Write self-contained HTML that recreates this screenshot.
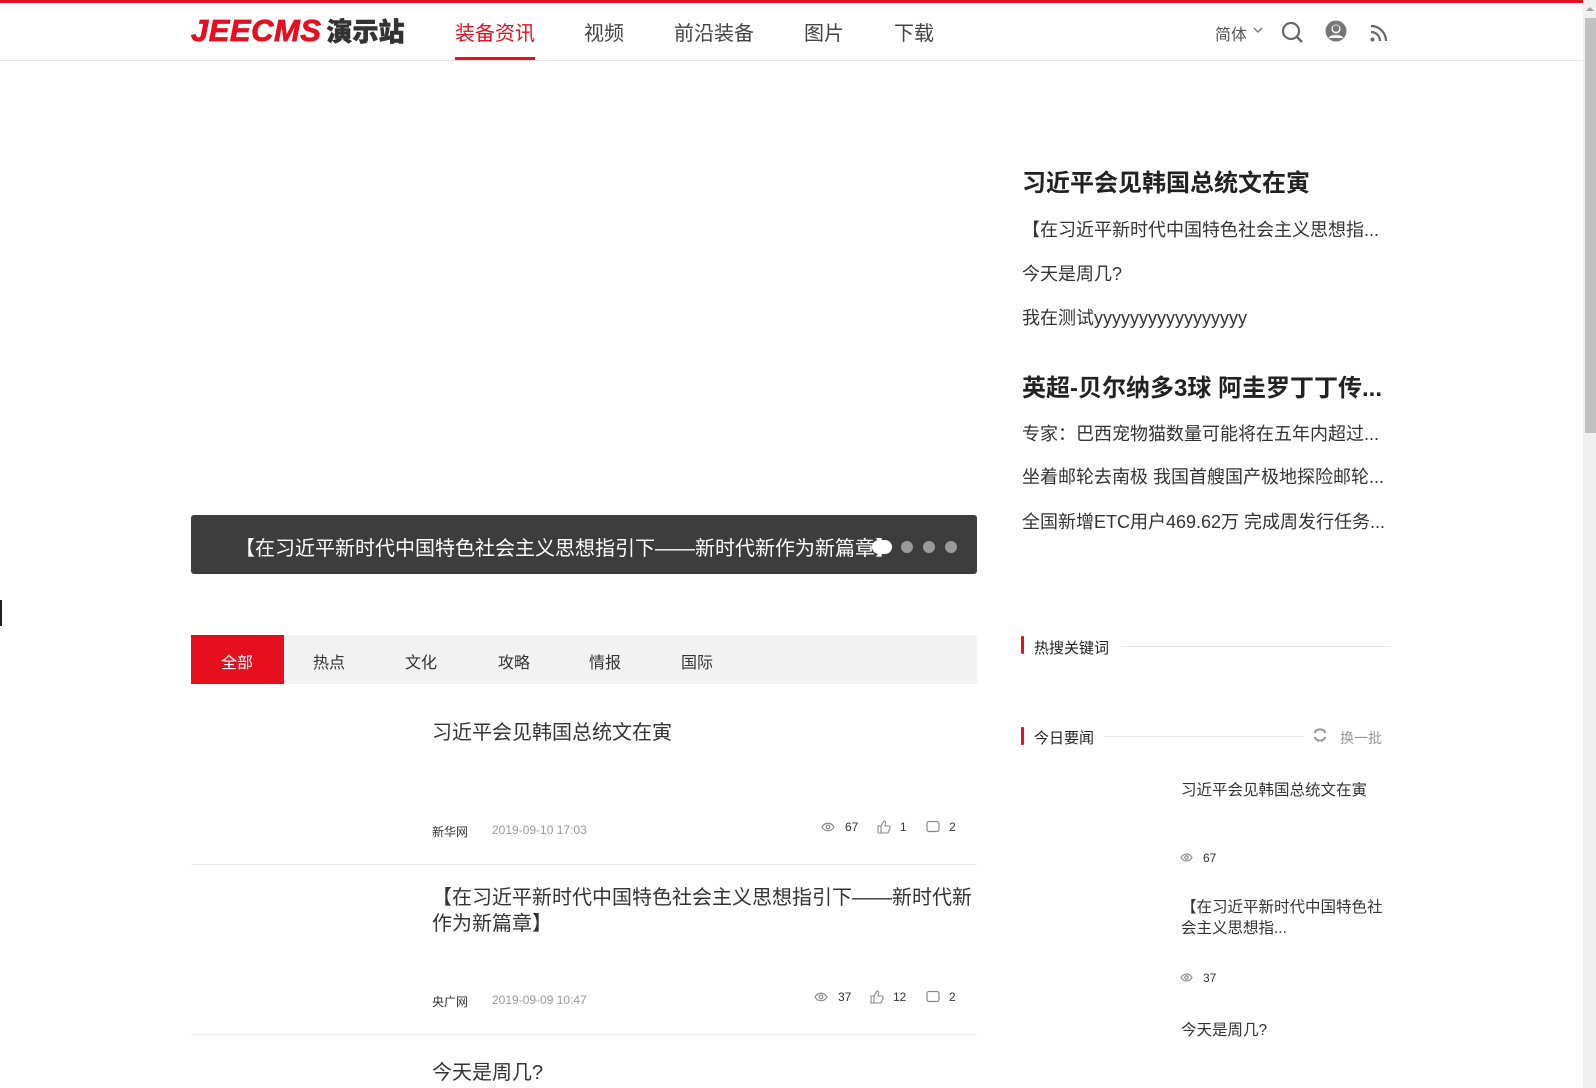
<!DOCTYPE html>
<html><head><meta charset="utf-8"><style>
*{margin:0;padding:0;box-sizing:border-box}
body{width:1596px;height:1088px;overflow:hidden;background:#fff;font-family:"Liberation Sans","Noto Sans CJK SC",sans-serif;color:#333;position:relative}
.a{position:absolute;white-space:nowrap}
.top{left:0;top:0;width:1583px;height:3px;background:#e60f1e}
.hdr{left:0;top:60px;width:1583px;height:1px;background:#e5e5e5}
.nav{font-size:20px;color:#444;top:17px}
.rt{font-size:24px;font-weight:bold;color:#222}
.ri{font-size:18px;color:#333}
.tab{font-size:16px;color:#333;top:649px}
.meta{font-size:12px;color:#333}
.date{font-size:12px;color:#999}
.st{font-size:12px;color:#333}
.div{height:1px;background:#e8e8e8;left:191px;width:786px}
.ic{display:inline-block;vertical-align:-2px}
</style></head><body>
<div class="a top"></div>
<div class="a hdr"></div>
<div class="a" style="left:191px;top:12px;font-size:31px;font-weight:900;font-style:italic;color:#e60f1e;letter-spacing:0.5px;-webkit-text-stroke:0.8px #e60f1e">JEECMS<span style="font-style:normal;color:#333;font-size:26px;margin-left:5px;letter-spacing:0;-webkit-text-stroke:0.5px #333">演示站</span></div>
<div class="a nav" style="left:455px;color:#e60f1e">装备资讯</div>
<div class="a" style="left:455px;top:57px;width:80px;height:3px;background:#e60f1e"></div>
<div class="a nav" style="left:584px">视频</div>
<div class="a nav" style="left:674px">前沿装备</div>
<div class="a nav" style="left:804px">图片</div>
<div class="a nav" style="left:894px">下载</div>
<div class="a" style="left:1215px;top:21px;font-size:16px;color:#555">简体</div>
<svg class="a" style="left:1253px;top:27px" width="10" height="7" viewBox="0 0 10 7"><path d="M1 1l4 4 4-4" fill="none" stroke="#777" stroke-width="1.4"/></svg>
<svg class="a" style="left:1281px;top:21px" width="24" height="24" viewBox="0 0 24 24"><circle cx="10" cy="10" r="8" fill="none" stroke="#666" stroke-width="2.2"/><path d="M16 16l5 5" stroke="#666" stroke-width="2.4"/></svg>
<svg class="a" style="left:1325px;top:20px" width="22" height="22" viewBox="0 0 22 22"><circle cx="11" cy="11" r="10.5" fill="#777"/><circle cx="11" cy="9" r="4.5" fill="#fff"/><path d="M3.5 18c2-4 13-4 15 0" fill="#fff"/><circle cx="11" cy="8.5" r="3.3" fill="#777"/></svg>
<svg class="a" style="left:1370px;top:24px" width="18" height="18" viewBox="0 0 18 18"><circle cx="2.5" cy="15.5" r="2" fill="#666"/><path d="M1 8a9 9 0 0 1 9 9M1 2a15 15 0 0 1 15 15" fill="none" stroke="#666" stroke-width="2.2"/></svg>

<div class="a" style="left:191px;top:515px;width:786px;height:59px;background:#3d3d3d;border-radius:3px"></div>
<div class="a" style="left:235px;top:532px;font-size:20px;color:#fff">【在习近平新时代中国特色社会主义思想指引下——新时代新作为新篇章】</div>
<div class="a" style="left:872px;top:540px;width:20px;height:14px;border-radius:7px;background:#fff"></div>
<div class="a" style="left:901px;top:541px;width:12px;height:12px;border-radius:6px;background:#9a9a9a"></div>
<div class="a" style="left:923px;top:541px;width:12px;height:12px;border-radius:6px;background:#9a9a9a"></div>
<div class="a" style="left:945px;top:541px;width:12px;height:12px;border-radius:6px;background:#9a9a9a"></div>

<div class="a rt" style="left:1022px;top:163px">习近平会见韩国总统文在寅</div>
<div class="a ri" style="left:1022px;top:216px">【在习近平新时代中国特色社会主义思想指...</div>
<div class="a ri" style="left:1022px;top:260px">今天是周几?</div>
<div class="a ri" style="left:1022px;top:304px">我在测试yyyyyyyyyyyyyyyyy</div>
<div class="a rt" style="left:1022px;top:368px">英超-贝尔纳多3球 阿圭罗丁丁传...</div>
<div class="a ri" style="left:1022px;top:420px">专家：巴西宠物猫数量可能将在五年内超过...</div>
<div class="a ri" style="left:1022px;top:463px">坐着邮轮去南极 我国首艘国产极地探险邮轮...</div>
<div class="a ri" style="left:1022px;top:508px">全国新增ETC用户469.62万 完成周发行任务...</div>

<div class="a" style="left:191px;top:635px;width:786px;height:49px;background:#f2f2f2"></div>
<div class="a" style="left:191px;top:635px;width:93px;height:49px;background:#e60f1e"></div>
<div class="a tab" style="left:221px;color:#fff">全部</div>
<div class="a tab" style="left:313px">热点</div>
<div class="a tab" style="left:405px">文化</div>
<div class="a tab" style="left:498px">攻略</div>
<div class="a tab" style="left:589px">情报</div>
<div class="a tab" style="left:681px">国际</div>

<svg width="0" height="0" style="position:absolute"><defs>
<symbol id="eye" viewBox="0 0 14 14"><path d="M1 7c3-5 9-5 12 0-3 5-9 5-12 0z" fill="none" stroke="#888" stroke-width="1.2"/><circle cx="7" cy="7" r="1.8" fill="none" stroke="#888" stroke-width="1.2"/></symbol>
<symbol id="thumb" viewBox="0 0 14 14"><path d="M1 6h3v7H1zM4 6l3-5c1.5 0 2 1 1.5 2.5L8 6h4c1 0 1.5 1 1 2l-1.5 4c-.3.7-.8 1-1.5 1H4" fill="none" stroke="#888" stroke-width="1.1"/></symbol>
<symbol id="cmt" viewBox="0 0 14 14"><rect x="1" y="1.5" width="12" height="10" rx="2" fill="none" stroke="#888" stroke-width="1.2"/><path d="M5 6.5h.1M9 6.5h.1" stroke="#888" stroke-width="1.2"/></symbol>
</defs></svg>

<div class="a" style="left:432px;top:716px;font-size:20px">习近平会见韩国总统文在寅</div>
<div class="a meta" style="left:432px;top:823px">新华网</div>
<div class="a date" style="left:492px;top:823px">2019-09-10 17:03</div>
<svg class="a" style="left:821px;top:820px" width="14" height="14"><use href="#eye"/></svg><div class="a st" style="left:845px;top:820px">67</div>
<svg class="a" style="left:877px;top:820px" width="14" height="14"><use href="#thumb"/></svg><div class="a st" style="left:900px;top:820px">1</div>
<svg class="a" style="left:926px;top:820px" width="14" height="14"><use href="#cmt"/></svg><div class="a st" style="left:949px;top:820px">2</div>
<div class="a div" style="top:864px"></div>
<div class="a" style="left:432px;top:885px;font-size:20px;line-height:26px;white-space:normal;width:548px">【在习近平新时代中国特色社会主义思想指引下——新时代新作为新篇章】</div>
<div class="a meta" style="left:432px;top:993px">央广网</div>
<div class="a date" style="left:492px;top:993px">2019-09-09 10:47</div>
<svg class="a" style="left:814px;top:990px" width="14" height="14"><use href="#eye"/></svg><div class="a st" style="left:838px;top:990px">37</div>
<svg class="a" style="left:870px;top:990px" width="14" height="14"><use href="#thumb"/></svg><div class="a st" style="left:893px;top:990px">12</div>
<svg class="a" style="left:926px;top:990px" width="14" height="14"><use href="#cmt"/></svg><div class="a st" style="left:949px;top:990px">2</div>
<div class="a div" style="top:1034px"></div>
<div class="a" style="left:432px;top:1056px;font-size:20px">今天是周几?</div>

<div class="a" style="left:1021px;top:636px;width:3px;height:18px;background:#e60f1e;border-radius:1px"></div>
<div class="a" style="left:1034px;top:637px;font-size:15px;color:#222">热搜关键词</div>
<div class="a" style="left:1122px;top:646px;width:268px;height:1px;background:#e5e5e5"></div>
<div class="a" style="left:1021px;top:727px;width:3px;height:18px;background:#e60f1e;border-radius:1px"></div>
<div class="a" style="left:1034px;top:727px;font-size:15px;color:#222">今日要闻</div>
<div class="a" style="left:1104px;top:736px;width:199px;height:1px;background:#e5e5e5"></div>
<svg class="a" style="left:1312px;top:727px" width="16" height="16" viewBox="0 0 16 16"><path d="M13.5 6A6 6 0 0 0 2.5 6M2.5 10a6 6 0 0 0 11 0" fill="none" stroke="#999" stroke-width="2"/></svg>
<div class="a" style="left:1340px;top:728px;font-size:14px;color:#999">换一批</div>

<div class="a" style="left:1181px;top:778px;font-size:15.5px">习近平会见韩国总统文在寅</div>
<svg class="a" style="left:1180px;top:851px" width="13" height="13"><use href="#eye"/></svg><div class="a st" style="left:1203px;top:851px">67</div>
<div class="a" style="left:1181px;top:897px;font-size:15.5px;line-height:21px;white-space:normal;width:212px">【在习近平新时代中国特色社会主义思想指...</div>
<svg class="a" style="left:1180px;top:971px" width="13" height="13"><use href="#eye"/></svg><div class="a st" style="left:1203px;top:971px">37</div>
<div class="a" style="left:1181px;top:1018px;font-size:15.5px">今天是周几?</div>

<div class="a" style="left:0;top:600px;width:2px;height:26px;background:#222"></div>
<div class="a" style="left:1583px;top:0;width:13px;height:1088px;background:#f0f0f0"></div>
<div class="a" style="left:1585px;top:18px;width:11px;height:415px;background:#c1c1c1"></div>
<div class="a" style="left:1586px;top:7px;width:0;height:0;border-left:4px solid transparent;border-right:4px solid transparent;border-bottom:4px solid #a3a3a3"></div>
</body></html>
